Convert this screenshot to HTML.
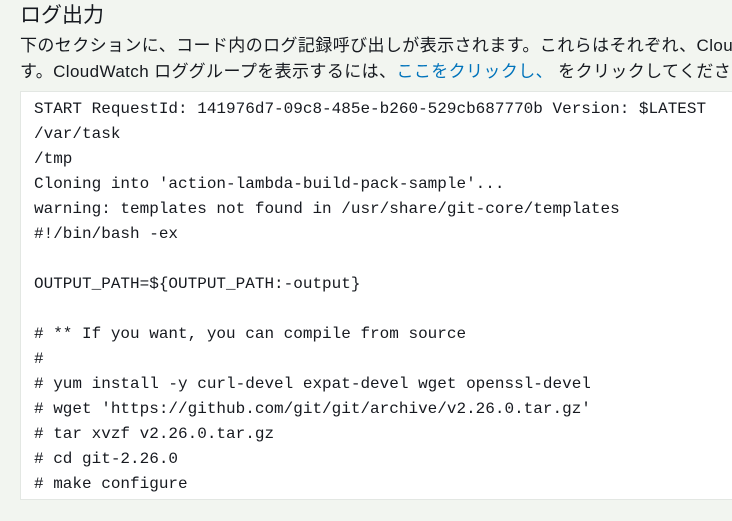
<!DOCTYPE html>
<html><head><meta charset="utf-8"><style>
html,body{margin:0;width:732px;height:521px;overflow:hidden}
body{background:#f2f5f0;font-family:"Liberation Sans","Noto Sans CJK JP",sans-serif;color:#16191f}
.wrap{position:relative;width:732px;height:521px;overflow:hidden}
h1{position:absolute;left:20px;top:1px;margin:0;font-weight:400;font-size:21px;line-height:30px;white-space:nowrap}
.p{position:absolute;left:20px;top:33px;width:712px;overflow:hidden;font-size:17px;letter-spacing:0.4px;line-height:26px;white-space:nowrap}
a{color:#0073bb;text-decoration:none}
.box{position:absolute;left:20px;top:91px;width:711px;height:407px;background:#fff;border:1px solid #e3e7e3;border-right:none;overflow:hidden}
pre{margin:0;position:absolute;left:13px;top:5px;font-family:"Liberation Mono",monospace;font-size:16px;line-height:25px;color:#16191f}
</style></head><body><div class="wrap">
<h1>ログ出力</h1>
<div class="p">下のセクションに、コード内のログ記録呼び出しが表示されます。これらはそれぞれ、CloudWatch<br>す。CloudWatch ロググループを表示するには、<a>ここをクリックし、</a> をクリックしてください。</div>
<div class="box"><pre>START RequestId: 141976d7-09c8-485e-b260-529cb687770b Version: $LATEST
/var/task
/tmp
Cloning into 'action-lambda-build-pack-sample'...
warning: templates not found in /usr/share/git-core/templates
#!/bin/bash -ex

OUTPUT_PATH=${OUTPUT_PATH:-output}

# ** If you want, you can compile from source
#
# yum install -y curl-devel expat-devel wget openssl-devel
# wget 'https://github.com/git/git/archive/v2.26.0.tar.gz'
# tar xvzf v2.26.0.tar.gz
# cd git-2.26.0
# make configure</pre></div>
</div></body></html>
